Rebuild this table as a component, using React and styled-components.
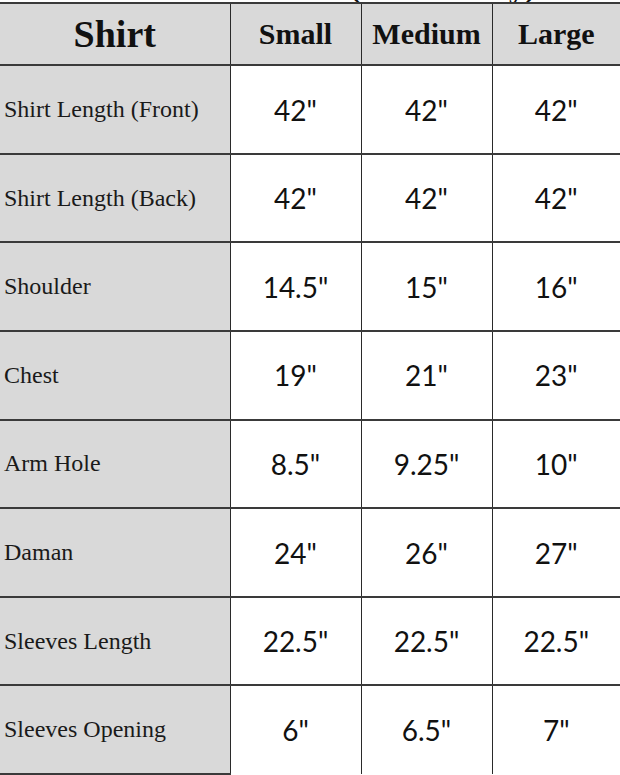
import React from "react";
import styled, { createGlobalStyle } from "styled-components";

const GlobalStyle = createGlobalStyle`
  html, body {
    margin: 0;
    padding: 0;
    background: #ffffff;
  }
  body {
    width: 620px;
    height: 775px;
    overflow: hidden;
  }
`;

const sizes = ["Small", "Medium", "Large"];

const rows = [
  { label: "Shirt Length (Front)", values: ['42"', '42"', '42"'] },
  { label: "Shirt Length (Back)", values: ['42"', '42"', '42"'] },
  { label: "Shoulder", values: ['14.5"', '15"', '16"'] },
  { label: "Chest", values: ['19"', '21"', '23"'] },
  { label: "Arm Hole", values: ['8.5"', '9.25"', '10"'] },
  { label: "Daman", values: ['24"', '26"', '27"'] },
  { label: "Sleeves Length", values: ['22.5"', '22.5"', '22.5"'] },
  { label: "Sleeves Opening", values: ['6"', '6.5"', '7"'] },
];

const SizeChart = () => {
  return (
    <Wrapper>
      <Caption>
        <span>Size Chart (Inches Only)</span>
      </Caption>
      <Table>
        <colgroup>
          <col style={{ width: "230px" }} />
          <col style={{ width: "131px" }} />
          <col style={{ width: "131px" }} />
          <col style={{ width: "128px" }} />
        </colgroup>
        <thead>
          <HeadRow>
            <TitleCell>Shirt</TitleCell>
            {sizes.map((s) => (
              <SizeCell key={s}>{s}</SizeCell>
            ))}
          </HeadRow>
        </thead>
        <tbody>
          {rows.map((row, i) => (
            <BodyRow key={row.label}>
              <LabelCell>{row.label}</LabelCell>
              {row.values.map((v, j) => (
                <ValueCell key={j} $last={i === rows.length - 1}>
                  {v}
                </ValueCell>
              ))}
            </BodyRow>
          ))}
        </tbody>
      </Table>
    </Wrapper>
  );
};

const Wrapper = styled.div`
  width: 620px;
  height: 775px;
  overflow: hidden;
  display: flex;
  flex-direction: column;
`;

/* title above the table, cropped so only its lowest strokes show */
const Caption = styled.div`
  height: 3px;
  overflow: hidden;
  display: flex;
  align-items: flex-end;
  padding-left: 197px;
  span {
    font-family: "Liberation Serif", serif;
    font-weight: bold;
    font-size: 32px;
    line-height: 1;
    color: #111;
    white-space: nowrap;
  }
`;

const Table = styled.table`
  width: 620px;
  border-collapse: collapse;
  table-layout: fixed;
  border-top: 2px solid #3a3a3a;
`;

const HeadRow = styled.tr`
  height: 62px;
`;

const BodyRow = styled.tr`
  height: 88.6px;
`;

const Cell = styled.td`
  padding: 0;
  vertical-align: middle;
  border-bottom: 2px solid #3a3a3a;
`;

const TitleCell = styled(Cell).attrs({ as: "th" })`
  background: #d9d9d9;
  font-family: "Liberation Serif", serif;
  font-weight: bold;
  font-size: 38px;
  color: #111;
  text-align: center;
`;

const SizeCell = styled(Cell).attrs({ as: "th" })`
  background: #d9d9d9;
  border-left: 1px solid #2a2a2a;
  font-family: "Liberation Serif", serif;
  font-weight: bold;
  font-size: 30px;
  color: #111;
  text-align: center;
`;

const LabelCell = styled(Cell)`
  background: #d9d9d9;
  font-family: "Liberation Serif", serif;
  font-size: 24px;
  color: #1a1a1a;
  text-align: left;
  padding-left: 4px;
`;

const ValueCell = styled(Cell)`
  background: #ffffff;
  border-left: 1px solid #2a2a2a;
  border-bottom: ${(p) => (p.$last ? "none" : "2px solid #3a3a3a")};
  font-family: Lato, "Liberation Sans", sans-serif;
  font-size: 28px;
  color: #111;
  text-align: center;
`;

const App = () => (
  <>
    <GlobalStyle />
    <SizeChart />
  </>
);

export default App;
